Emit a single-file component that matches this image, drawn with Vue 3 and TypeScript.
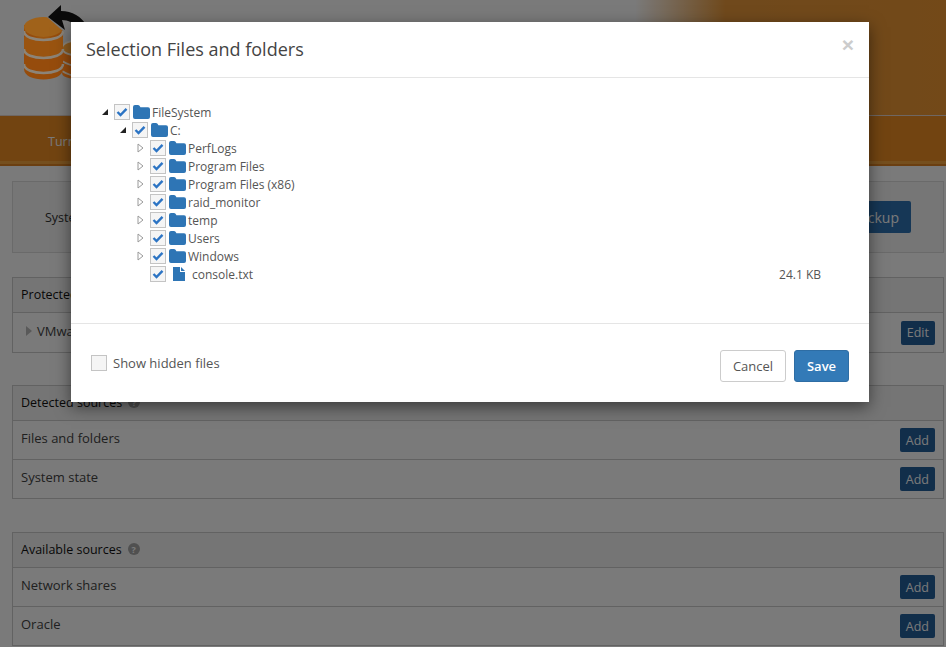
<script setup lang="ts">
interface TreeNode {
  label: string
  level: number
  kind: 'folder' | 'file'
  open?: boolean
  size?: string
}

const nodes: TreeNode[] = [
  { label: 'FileSystem', level: 0, kind: 'folder', open: true },
  { label: 'C:', level: 1, kind: 'folder', open: true },
  { label: 'PerfLogs', level: 2, kind: 'folder' },
  { label: 'Program Files', level: 2, kind: 'folder' },
  { label: 'Program Files (x86)', level: 2, kind: 'folder' },
  { label: 'raid_monitor', level: 2, kind: 'folder' },
  { label: 'temp', level: 2, kind: 'folder' },
  { label: 'Users', level: 2, kind: 'folder' },
  { label: 'Windows', level: 2, kind: 'folder' },
  { label: 'console.txt', level: 2, kind: 'file', size: '24.1 KB' },
]

const detected = ['Files and folders', 'System state']
const available = ['Network shares', 'Oracle']
</script>

<template>
  <div class="page">
    <header class="top">
      <svg class="logo" width="70" height="80" viewBox="0 0 70 80">
        <!-- small stack behind -->
        <path d="M38 44 v24 c0 8 32 8 32 0 v-24z" fill="#964c0e" />
        <ellipse cx="56" cy="43" rx="18" ry="8" fill="#8e5c1e" stroke="#8c8478" stroke-width="2" />
        <path d="M38 56 q16 10 32 0 M38 66 q16 10 32 0" fill="none" stroke="#8c8478" stroke-width="2" />
        <!-- large stack -->
        <path d="M0 20 v44 c0 14 39 14 39 0 v-44z" fill="#964c0c" />
        <path d="M0 32 v14 c0 9 39 9 39 0 v-14z" fill="#9a5410" />
        <path d="M0 26 c0 12 39 12 39 0" fill="none" stroke="#8c8478" stroke-width="2.500" />
        <path d="M0 44 c0 12 39 12 39 0" fill="none" stroke="#8c8478" stroke-width="2.500" />
        <path d="M0 59 c0 12 39 12 39 0" fill="none" stroke="#8c8478" stroke-width="2.500" />
        <ellipse cx="19.500" cy="22" rx="19.500" ry="10" fill="#a0621a" />
        <path d="M23 12 L40 27 L46 0 L23 0z" fill="#7a7a7a" />
        <path d="M24 12 L37 0 L37 6 C48 6 58 12 62 20 L56 24 C50 18 44 15 38 15 L41 25z" fill="#0a0a0a" />
      </svg>
    </header>
    <nav class="nav"><span class="nav-item">Turn</span></nav>

    <main class="content">
      <section class="system-box">
        <span>System</span>
        <button class="btn btn-big" type="button">Start backup</button>
      </section>

      <section class="panel panel-protected">
        <div class="panel-head">Protected</div>
        <div class="panel-row row-first">
          <span class="vm"><i class="arrow-open"></i>VMware</span>
          <button class="btn" type="button">Edit</button>
        </div>
      </section>

      <section class="panel panel-detected">
        <div class="panel-head">Detected sources <i class="help">?</i></div>
        <div v-for="item in detected" :key="item" class="panel-row">
          <span>{{ item }}</span>
          <button class="btn" type="button">Add</button>
        </div>
      </section>

      <section class="panel">
        <div class="panel-head">Available sources <i class="help">?</i></div>
        <div v-for="item in available" :key="item" class="panel-row">
          <span>{{ item }}</span>
          <button class="btn" type="button">Add</button>
        </div>
      </section>
    </main>

    <div class="overlay"></div>

    <div class="modal">
      <div class="modal-header">
        <h4>Selection Files and folders</h4>
        <span class="close">×</span>
      </div>
      <div class="modal-body">
        <div
          v-for="node in nodes"
          :key="node.label"
          class="tree-row"
          :style="{ paddingLeft: `${node.level * 18}px` }"
        >
          <span class="toggle">
            <svg v-if="node.kind === 'folder' && node.open" width="8" height="8" viewBox="0 0 8 8">
              <path d="M7 1 V7 H1z" fill="#222" />
            </svg>
            <svg v-else-if="node.kind === 'folder'" width="7" height="10" viewBox="0 0 7 10">
              <path d="M1 1 L6 5 L1 9z" fill="#fff" stroke="#9a9a9a" />
            </svg>
          </span>
          <span class="check">
            <svg width="12" height="10" viewBox="0 0 12 10">
              <path d="M1.500 5 L4.500 8 L10.500 1.800" fill="none" stroke="#2c74c4" stroke-width="2.400" />
            </svg>
          </span>
          <svg v-if="node.kind === 'folder'" class="folder" width="17" height="14" viewBox="0 0 17 14">
            <path d="M0 2 q0 -2 2 -2 h3 q1.500 0 2 1.500 l.4 .8 h7.600 q2 0 2 2 v7.700 q0 2 -2 2 h-13 q-2 0 -2 -2z" fill="#2e75b5" />
          </svg>
          <svg v-else class="file" width="13" height="14" viewBox="0 0 13 14">
            <path d="M0 0 h7 v5 h5 v9 h-12z M8 0 l4 4 h-4z" fill="#2e75b5" />
          </svg>
          <span class="tree-label">{{ node.label }}</span>
          <span v-if="node.size" class="tree-size">{{ node.size }}</span>
        </div>
      </div>
      <div class="modal-footer">
        <label class="hidden-files"><span class="check check--empty"></span>Show hidden files</label>
        <div class="actions">
          <button class="btn-cancel" type="button">Cancel</button>
          <button class="btn-save" type="button">Save</button>
        </div>
      </div>
    </div>
  </div>
</template>

<style>
html,
body {
  margin: 0;
  height: 100%;
  overflow: hidden;
  background: #fff;
}
</style>

<style scoped>
.page {
  position: relative;
  width: 946px;
  height: 647px;
  overflow: hidden;
  background: #fff;
  font-family: 'Open Sans', 'Liberation Sans', sans-serif;
  font-size: 12.5px;
  color: #333;
}

.top {
  height: 110px;
  border-bottom: 1px solid #e8d8d0;
  padding: 5px 0 0 24px;
  background: linear-gradient(90deg, #fff 0, #fff 635px, #ea9a3c 725px, #f09a34 100%);
}

.logo {
  display: block;
  position: relative;
  z-index: 2;
}

.nav {
  height: 50px;
  box-sizing: border-box;
  display: flex;
  align-items: center;
  padding-left: 48px;
  background: #ee8e24;
  box-shadow: inset 0 -2px 0 #e08424, inset 0 -5px 0 #f4a640;
  color: #fff;
}

.content {
  padding: 15px 2px 0 12px;
}

.system-box {
  height: 72px;
  box-sizing: border-box;
  border: 1px solid #ddd;
  background: #f6f6f6;
  display: flex;
  justify-content: space-between;
  align-items: center;
  padding: 0 32px;
  margin-bottom: 24px;
}

.panel {
  border: 1px solid #ccc;
  margin-bottom: 33px;
  background: #fff;
}

.panel-protected {
  margin-bottom: 32px;
}

.panel-head {
  height: 35px;
  box-sizing: border-box;
  display: flex;
  align-items: center;
  gap: 6px;
  padding: 0 0 2px 8px;
  background: #f5f5f5;
  border-bottom: 1px solid #ccc;
  color: #111;
}

.panel-row {
  height: 38px;
  display: flex;
  align-items: center;
  justify-content: space-between;
  padding: 0 8px;
  border-bottom: 1px solid #ccc;
  color: #444;
  font-size: 13px;
}

.panel-row > span {
  margin-bottom: 4px;
}

.panel-row:last-child {
  border-bottom: 0;
}

.row-first {
  height: 39px;
}

.vm {
  display: flex;
  align-items: center;
  gap: 5px;
  padding-left: 5px;
}

.arrow-open {
  width: 0;
  height: 0;
  border-left: 6px solid #bbb;
  border-top: 5px solid transparent;
  border-bottom: 5px solid transparent;
}

.help {
  width: 12px;
  height: 12px;
  border-radius: 50%;
  background: #a8a8a8;
  color: #fff;
  font-size: 9px;
  font-style: normal;
  font-weight: 700;
  display: inline-flex;
  align-items: center;
  justify-content: center;
}

.btn {
  height: 24px;
  padding: 0 6px;
  border: 0;
  border-radius: 2px;
  background: #24609c;
  color: #fff;
  font: inherit;
  font-size: 12.5px;
}

.btn-big {
  height: 32px;
  padding: 0 12px;
  background: #2f74b4;
  font-size: 14px;
}

.overlay {
  position: absolute;
  inset: 0;
  z-index: 1;
  background: rgba(0, 0, 0, 0.52);
}

.modal {
  position: absolute;
  left: 71px;
  top: 22px;
  z-index: 3;
  width: 798px;
  height: 380px;
  background: #fff;
  box-shadow: 0 5px 15px rgba(0, 0, 0, 0.5);
  display: flex;
  flex-direction: column;
}

.modal-header {
  height: 56px;
  box-sizing: border-box;
  border-bottom: 1px solid #e5e5e5;
  display: flex;
  align-items: center;
  justify-content: space-between;
  padding: 0 15px 2px;
}

.modal-header h4 {
  margin: 0;
  font-size: 18px;
  font-weight: 400;
  color: #444;
}

.close {
  font-family: 'Liberation Sans', sans-serif;
  font-size: 21px;
  font-weight: 700;
  color: #ccc;
  margin: -8px 0 0;
  line-height: 1;
}

.modal-body {
  height: 245px;
  box-sizing: border-box;
  padding: 25px 48px 0 30px;
  font-size: 12px;
}

.tree-row {
  height: 18px;
  display: flex;
  align-items: center;
}

.toggle {
  width: 13px;
  display: flex;
  justify-content: flex-start;
  flex: none;
}

.check {
  width: 16px;
  height: 16px;
  box-sizing: border-box;
  border: 1px solid #c4c4c4;
  background: #f5f5f5;
  display: inline-flex;
  align-items: center;
  justify-content: center;
  flex: none;
}

.folder {
  margin: 0 2px 0 3px;
  flex: none;
}

.file {
  margin: 0 6px 0 7px;
  flex: none;
}

.tree-label {
  color: #555;
  white-space: nowrap;
}

.tree-size {
  margin-left: auto;
  color: #555;
}

.modal-footer {
  flex: 1;
  border-top: 1px solid #e5e5e5;
  display: flex;
  align-items: center;
  justify-content: space-between;
  padding: 6px 20px 0 20px;
}

.hidden-files {
  display: flex;
  align-items: center;
  gap: 6px;
  color: #555;
  font-size: 13px;
  margin-bottom: 7px;
}

.actions {
  display: flex;
  gap: 8px;
}

.btn-cancel,
.btn-save {
  height: 32px;
  border-radius: 3px;
  font: inherit;
  font-size: 13px;
}

.btn-cancel {
  width: 66px;
  background: #fff;
  border: 1px solid #ccc;
  color: #555;
}

.btn-save {
  width: 55px;
  background: #337ab7;
  border: 1px solid #2e6da4;
  color: #fff;
  font-weight: 600;
}
</style>
